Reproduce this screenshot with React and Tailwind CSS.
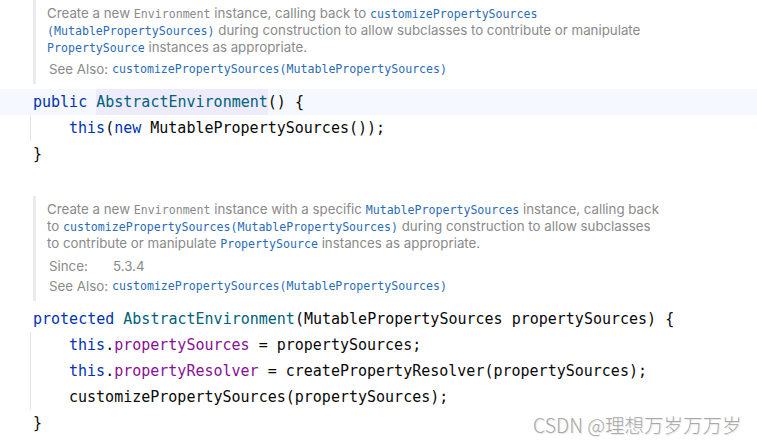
import React from 'react';

const mono = "font-['DejaVu_Sans_Mono',monospace]";

// gray code reference inside doc text
const C = ({ children }) => <span className={`${mono} text-[11.6px]`}>{children}</span>;
// blue link inside doc text
const L = ({ children }) => <span className={`${mono} text-[11.6px] text-[#2a6bb8]`}>{children}</span>;

const Kw = ({ children }) => <span className="text-[#0033b3]">{children}</span>;
const Fld = ({ children }) => <span className="text-[#871094]">{children}</span>;
const Fn = ({ children }) => <span className="text-[#00627a]">{children}</span>;

const DocLine = ({ children }) => <div className="h-[17px] leading-[17px] whitespace-nowrap">{children}</div>;

const DocBlock = ({ lines, since, seeAlso, className }) => (
    <div className={`ml-[33px] border-l-[3px] border-[#ebebeb] pl-[11px] pb-[4px] text-[13.3px] text-[#8a8a8a] font-['Inter',sans-serif] ${className}`}>
        {lines.map((l, i) => <DocLine key={i}>{l}</DocLine>)}
        <div className="mt-[4px] pl-[2px]">
            {since && (
                <div className="flex h-[21px] items-center">
                    <span className="w-[64px]">Since:</span>
                    <span>{since}</span>
                </div>
            )}
            <div className="flex h-[20px] items-center whitespace-nowrap">
                <span className="mr-[4px]">See Also:</span>
                <L>{seeAlso}</L>
            </div>
        </div>
    </div>
);

const CodeLine = ({ children, className = '' }) => (
    <div className={`h-[26px] leading-[26px] whitespace-pre ${className}`}>{children}</div>
);

export default function App() {
    return (
        <div className={`relative h-[444px] w-[757px] overflow-hidden bg-white ${mono} text-[15px] text-[#080808]`}>
            <DocBlock
                className="pt-[5px]"
                lines={[
                    <>Create a new <C>Environment</C> instance, calling back to <L>customizePropertySources</L></>,
                    <><L>(MutablePropertySources)</L> during construction to allow subclasses to contribute or manipulate</>,
                    <><L>PropertySource</L> instances as appropriate.</>,
                ]}
                seeAlso="customizePropertySources(MutablePropertySources)"
            />

            <div className="mt-[5px]">
                <div className="flex h-[26px] bg-[#f5f8fe] pl-[33px] leading-[26px] whitespace-pre">
                    <Kw>public </Kw>
                    <span className="bg-[#edebfc]"><Fn>AbstractEnvironment</Fn></span>
                    <span>() {'{'}</span>
                </div>
                <div className="ml-[30px] border-l border-[#e6e6e6] pl-[38px]">
                    <CodeLine><Kw>this</Kw>(<Kw>new</Kw> MutablePropertySources());</CodeLine>
                </div>
                <CodeLine className="pl-[33px]">{'}'}</CodeLine>
            </div>

            <DocBlock
                className="mt-[29px] pt-[5px]"
                lines={[
                    <>Create a new <C>Environment</C> instance with a specific <L>MutablePropertySources</L> instance, calling back</>,
                    <>to <L>customizePropertySources(MutablePropertySources)</L> during construction to allow subclasses</>,
                    <>to contribute or manipulate <L>PropertySource</L> instances as appropriate.</>,
                ]}
                since="5.3.4"
                seeAlso="customizePropertySources(MutablePropertySources)"
            />

            <div className="mt-[5px]">
                <CodeLine className="pl-[33px]"><Kw>protected </Kw><Fn>AbstractEnvironment</Fn>(MutablePropertySources propertySources) {'{'}</CodeLine>
                <div className="ml-[30px] border-l border-[#e6e6e6] pl-[38px]">
                    <CodeLine><Kw>this</Kw>.<Fld>propertySources</Fld> = propertySources;</CodeLine>
                    <CodeLine><Kw>this</Kw>.<Fld>propertyResolver</Fld> = createPropertyResolver(propertySources);</CodeLine>
                    <CodeLine>customizePropertySources(propertySources);</CodeLine>
                </div>
                <CodeLine className="pl-[33px]">{'}'}</CodeLine>
            </div>

            <div className="absolute left-[533px] top-[411px] font-['Noto_Sans_CJK_SC','Liberation_Sans',sans-serif] text-[19.5px] font-light leading-[28px] text-[#a8a8a8] [text-shadow:1px_1px_1px_#e4e4e4]">
                CSDN @理想万岁万万岁
            </div>
        </div>
    );
}
